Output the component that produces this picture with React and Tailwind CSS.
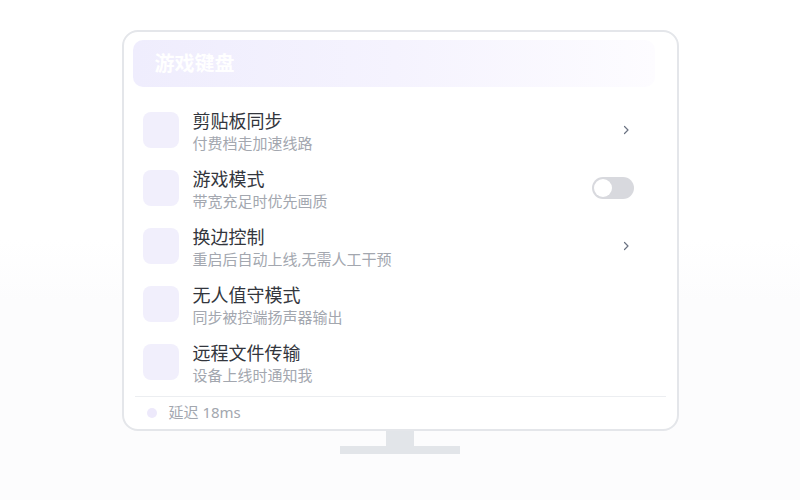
import React from "react";

const rows = [
  { title: "剪贴板同步", desc: "付费档走加速线路", action: "chevron" },
  { title: "游戏模式", desc: "带宽充足时优先画质", action: "toggle" },
  { title: "换边控制", desc: "重启后自动上线,无需人工干预", action: "chevron" },
  { title: "无人值守模式", desc: "同步被控端扬声器输出", action: null },
  { title: "远程文件传输", desc: "设备上线时通知我", action: null },
];

const Chevron = () => (
  <svg width="8" height="10" viewBox="0 0 8 10" fill="none" className="text-gray-500">
    <path d="M2.5 1.5 L6 5 L2.5 8.5" stroke="currentColor" strokeWidth="1.2" strokeLinecap="round" strokeLinejoin="round" />
  </svg>
);

const Toggle = () => (
  <div className="w-[42px] h-[22px] rounded-full bg-[#d8d9de] p-[2px] flex items-center">
    <div className="w-[18px] h-[18px] rounded-full bg-white" />
  </div>
);

const App = () => {
  return (
    <div
      className="w-[800px] h-[500px] flex flex-col items-center pt-[30px] bg-[linear-gradient(to_bottom,#ffffff_0%,#ffffff_48%,#fcfcfd_60%,#fcfcfd_100%)]"
      style={{ fontFamily: '"Noto Sans", "Noto Sans CJK SC", sans-serif' }}
    >
      {/* screen */}
      <div className="w-[557px] h-[401px] rounded-[16px] border-2 border-[#e4e6ea] bg-white flex flex-col pt-[8px] px-[9px]">
        <div className="w-[522px] h-[47px] rounded-[10px] bg-gradient-to-r from-[#efedfd] via-[#f5f3fe] to-[#fdfcff] flex items-center pl-[22px]">
          <span className="text-white text-[20px] font-bold leading-none">游戏键盘</span>
        </div>

        <div className="flex flex-col mt-[14px]">
          {rows.map((row) => (
            <div key={row.title} className="h-[58px] flex items-center pl-[10px] pr-[34px]">
              <div className="w-[36px] h-[36px] rounded-[8px] bg-[#f1effc] shrink-0" />
              <div className="flex flex-col ml-[14px] flex-1 mt-[2px]">
                <span className="text-[18px] leading-[23px] text-[#33363d]">{row.title}</span>
                <span className="text-[15px] leading-[20px] text-[#a3a7af]">{row.desc}</span>
              </div>
              {row.action === "chevron" && (
                <div className="w-[20px] flex justify-center mr-[-2px]">
                  <Chevron />
                </div>
              )}
              {row.action === "toggle" && <Toggle />}
            </div>
          ))}
        </div>

        <div className="mx-[2px] mt-[5px] border-t border-[#eceef1] flex items-center h-[32px] pl-[12px] gap-[12px]">
          <div className="w-[10px] h-[10px] rounded-full bg-[#ede9fb]" />
          <span className="text-[15px] text-[#a3a7af] leading-none">延迟 18ms</span>
        </div>
      </div>

      {/* stand */}
      <div className="w-[28px] h-[15px] bg-[#e2e5e9]" />
      <div className="w-[120px] h-[8px] bg-[#e2e5e9]" />
    </div>
  );
};

export default App;
